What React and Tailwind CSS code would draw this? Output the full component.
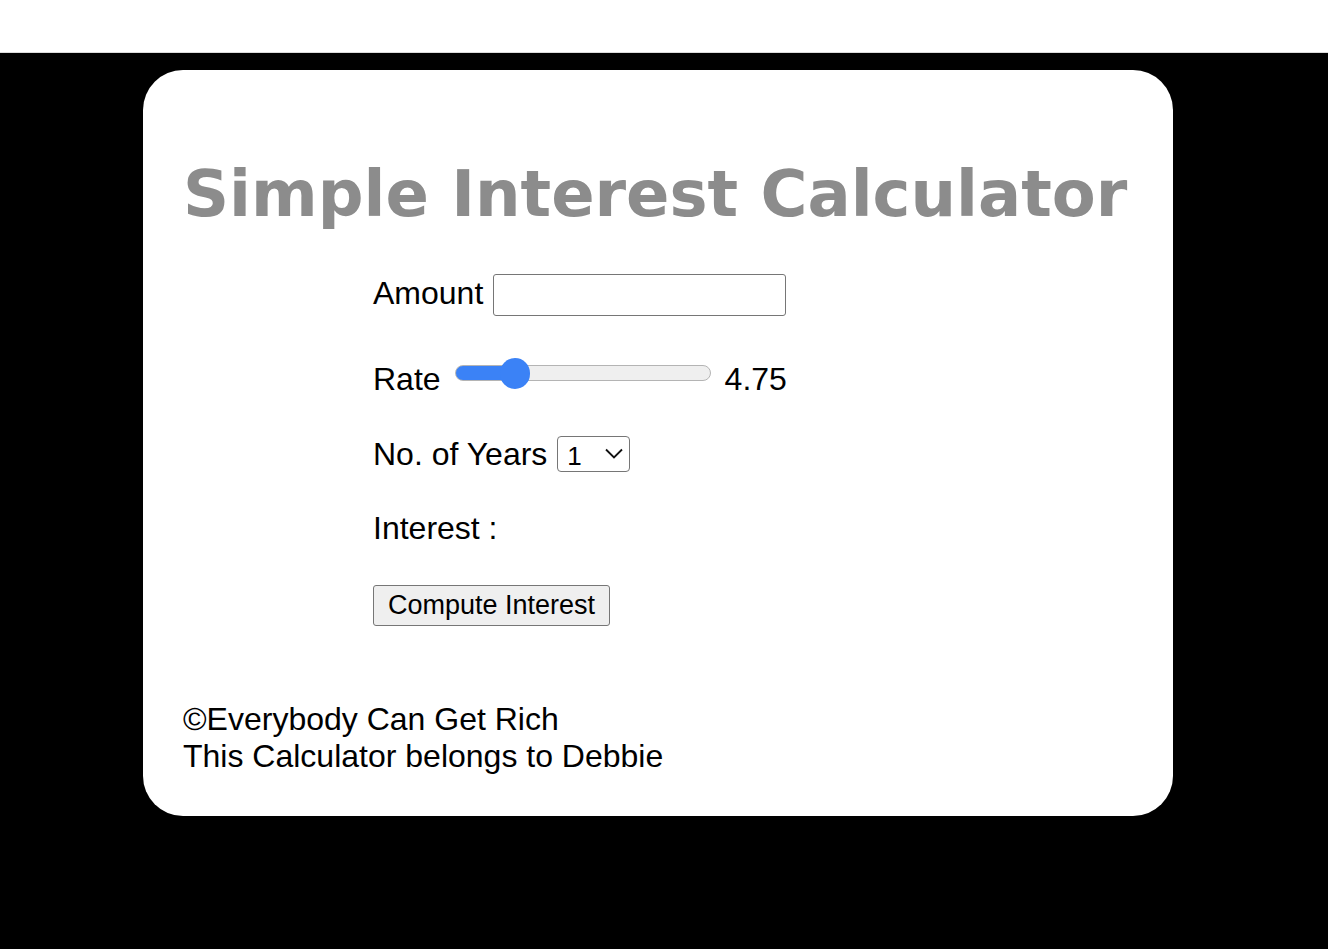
import { useState } from 'react'

export default function App() {
  const [rate, setRate] = useState(4.75)
  const frac = (rate - 1) / 19

  return (
    <div className="min-h-[949px] bg-black font-['Liberation_Sans',Arial,sans-serif] text-black">
      {/* top strip */}
      <div className="h-[53px] bg-white border-b border-[#dcdcdc]" />

      <div className="pt-[17px] pl-[143px]">
        <main className="w-[1030px] bg-white rounded-[40px] pl-[40px] pt-[84px] pb-[41px]">
          <h1 className="font-['DejaVu_Sans',Verdana,sans-serif] font-bold text-[64px] leading-[80px] text-[#8c8c8c]">
            Simple Interest Calculator
          </h1>

          <div className="ml-[190px] mt-[40px] flex flex-col text-[32px]">
            {/* Amount */}
            <div className="flex items-center h-[42px]">
              <label htmlFor="amount" className="mt-[-4px]">Amount</label>
              <input
                id="amount"
                type="text"
                className="ml-[10px] w-[293px] h-[42px] border border-[#767676] rounded-[3px] px-2 outline-none"
              />
            </div>

            {/* Rate */}
            <div className="flex items-center h-[40px] mt-[40px]">
              <span className="mt-[6px]">Rate</span>
              <input
                type="range"
                min="1"
                max="20"
                step="0.25"
                value={rate}
                onChange={(e) => setRate(Number(e.target.value))}
                style={{
                  background: `linear-gradient(to right, #3b82f6 0, #3b82f6 calc(15px + ${frac} * (100% - 30px)), #efefef calc(15px + ${frac} * (100% - 30px)), #efefef 100%)`,
                }}
                className="ml-[14px] mt-[-6px] w-[256px] h-[16px] appearance-none rounded-full border border-[#b4b4b4] outline-none [&::-webkit-slider-thumb]:appearance-none [&::-webkit-slider-thumb]:w-[30px] [&::-webkit-slider-thumb]:h-[31px] [&::-webkit-slider-thumb]:rounded-full [&::-webkit-slider-thumb]:bg-[#3b82f6]"
              />
              <span className="ml-[14px] mt-[6px]">{rate}</span>
            </div>

            {/* Years */}
            <div className="flex items-center h-[36px] mt-[40px]">
              <span>No. of Years</span>
              <div className="relative flex ml-[10px]">
                <select className="appearance-none w-[73px] h-[36px] border border-[#767676] rounded-[4px] bg-white text-[26px] pl-[9px] outline-none">
                  {Array.from({ length: 10 }, (_, i) => (
                    <option key={i + 1}>{i + 1}</option>
                  ))}
                </select>
                <svg
                  className="absolute right-[7px] top-[12px] pointer-events-none"
                  width="18"
                  height="12"
                  viewBox="0 0 18 12"
                  fill="none"
                >
                  <path d="M1 1.5 L9 9.5 L17 1.5" stroke="#111" strokeWidth="1.8" />
                </svg>
              </div>
            </div>

            {/* Interest */}
            <div className="flex items-center h-[40px] mt-[36px]">Interest :</div>

            {/* Button */}
            <div className="mt-[31px] h-[41px]">
              <button className="w-[237px] h-[41px] border border-[#767676] rounded-[3px] bg-[#efefef] text-[27px] leading-none">
                Compute Interest
              </button>
            </div>
          </div>

          <footer className="mt-[81px] text-[32px] leading-[37px]">
            <div>©Everybody Can Get Rich</div>
            <div>This Calculator belongs to Debbie</div>
          </footer>
        </main>
      </div>
    </div>
  )
}
